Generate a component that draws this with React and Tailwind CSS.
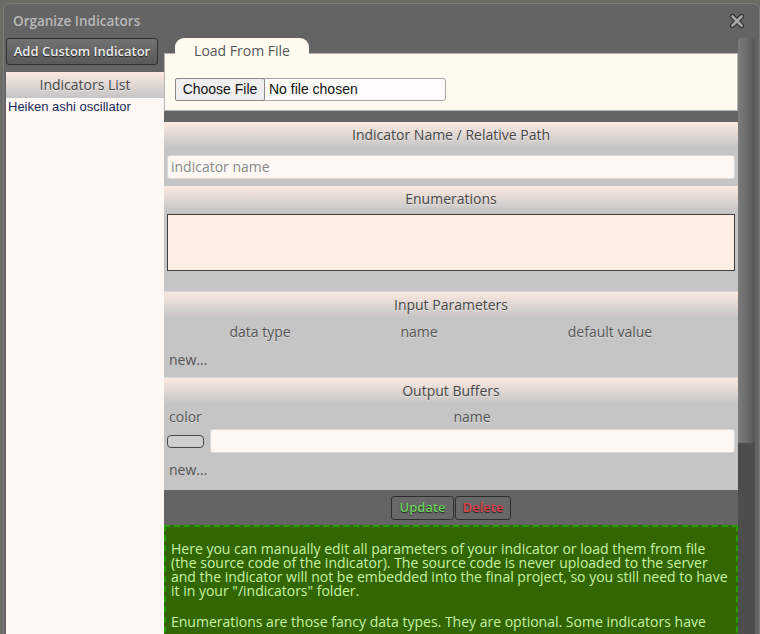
import React from "react";

const OS = { fontFamily: '"Open Sans", "DejaVu Sans", sans-serif' };
const AR = { fontFamily: '"Liberation Sans", Arial, sans-serif' };

function Header({ children }) {
  return (
    <div className="h-[26px] pb-[2px] flex items-center justify-center text-[14px] text-[#474747] bg-gradient-to-b from-[#fbe9e0] to-[#c5c5c5] [text-shadow:0_1px_0_rgba(255,255,255,0.45)]">
      {children}
    </div>
  );
}

function CloseIcon() {
  return (
    <svg width="16" height="16" viewBox="0 0 16 16">
      <path d="M3.5 3.5 L12.5 12.5 M12.5 3.5 L3.5 12.5" stroke="#333" strokeWidth="5.2" strokeLinecap="round" />
      <path d="M3.5 3.5 L12.5 12.5 M12.5 3.5 L3.5 12.5" stroke="#a8a8a8" strokeWidth="2.6" strokeLinecap="round" />
    </svg>
  );
}

export default function App() {
  return (
    <div className="w-[760px] h-[634px] overflow-hidden bg-[#6c6c66] pt-[3px] pl-[3px]" style={OS}>
      <div className="w-[757px] h-[640px] bg-[#646464] rounded-t-[7px] border-t border-l border-r border-[#7a7a7a] flex flex-col">
        {/* title bar */}
        <div className="h-[34px] shrink-0 flex items-center justify-between pl-[9px] pr-[14px]">
          <span className="text-[13.5px] font-semibold text-[#b9b9b9]">Organize Indicators</span>
          <CloseIcon />
        </div>

        <div className="flex flex-1 min-h-0">
          {/* left column */}
          <div className="w-[160px] pl-[2px] flex flex-col">
            <div className="h-[27px] w-[152px] shrink-0 rounded-[3px] border border-[#2f2f2f] bg-gradient-to-b from-[#727272] to-[#5a5a5a] flex items-center justify-center text-[13px] font-semibold text-[#ececec] [text-shadow:0_1px_1px_#222]">
              Add Custom Indicator
            </div>
            <div className="mt-[7px] flex-1 bg-[#fdf8f4] flex flex-col">
              <Header>Indicators List</Header>
              <div className="pl-[2px] text-[13px] leading-[18px] text-[#1c2a5c]" style={AR}>
                Heiken ashi oscillator
              </div>
            </div>
          </div>

          {/* right column */}
          <div className="w-[574px] flex flex-col">
            <div className="ml-[11px] w-[134px] h-[16px] rounded-t-[9px] bg-[#fffaf0] relative z-10 -mb-[1px] text-center">
              <span className="block pt-[4px] text-[14px] leading-[18px] text-[#555]">Load From File</span>
            </div>
            <div className="h-[58px] bg-[#fffaf0] border border-[#b3b3b3] pt-[24px] pl-[10px]">
              <div className="w-[271px] h-[23px] border border-[#a5a5a5] rounded-[3px] bg-[#fffdf9] flex items-center" style={AR}>
                <div className="w-[90px] h-[23px] -ml-[1px] bg-[#efefef] border border-[#8a8a8a] rounded-[2px] flex items-center justify-center text-[14px] text-[#111]">
                  Choose File
                </div>
                <span className="ml-[4px] text-[14px] text-[#111]">No file chosen</span>
              </div>
            </div>

            <div className="h-[11px]" />

            {/* Indicator name */}
            <div className="bg-[#c5c5c5]">
              <Header>Indicator Name / Relative Path</Header>
              <div className="px-[3px] pt-[7px] pb-[7px]">
                <div className="h-[24px] pb-[1px] rounded-[3px] border border-[#d8d8d8] bg-[#fdf8f4] flex items-center pl-[3px] text-[14px] text-[#8a8a8a]">
                  indicator name
                </div>
              </div>
            </div>

            {/* Enumerations */}
            <div className="bg-[#c5c5c5] border-b border-[#d6d6d6]">
              <Header>Enumerations</Header>
              <div className="px-[3px] pt-[2px] h-[79px]">
                <div className="h-[57px] border border-[#3e3e3e] bg-[#fdeee6]" />
              </div>
            </div>

            {/* Input Parameters */}
            <div className="bg-[#c5c5c5] border-b border-[#d6d6d6] h-[86px]">
              <Header>Input Parameters</Header>
              <div className="flex px-[3px] h-[26px] items-center text-[14px] text-[#555] [text-shadow:0_1px_0_rgba(255,255,255,0.4)]">
                <div className="w-[186px] text-center">data type</div>
                <div className="w-[132px] text-center">name</div>
                <div className="flex-1 text-center">default value</div>
              </div>
              <div className="pl-[5px] pt-[5px] text-[14px] text-[#555]">new...</div>
            </div>

            {/* Output Buffers */}
            <div className="bg-[#c5c5c5] h-[112px]">
              <Header>Output Buffers</Header>
              <div className="flex px-[3px] h-[25px] items-center text-[14px] text-[#555] [text-shadow:0_1px_0_rgba(255,255,255,0.4)]">
                <div className="w-[42px] pl-[2px]">color</div>
                <div className="flex-1 text-center">name</div>
              </div>
              <div className="flex items-center px-[3px] gap-[6px]">
                <div className="w-[37px] h-[13px] rounded-[4px] border border-[#474747] bg-[#cfcfcf]" />
                <div className="flex-1 h-[24px] rounded-[3px] border border-[#d8d8d8] bg-[#fdf8f4]" />
              </div>
              <div className="pl-[5px] pt-[6px] text-[14px] text-[#555]">new...</div>
            </div>

            {/* buttons */}
            <div className="h-[35px] flex items-center justify-center">
              <div className="flex gap-[1px]">
                <div className="h-[24px] w-[63px] rounded-[3px] border border-[#2e2e2e] bg-[#686868] flex items-center justify-center text-[13px] font-semibold text-[#6bd25a] [text-shadow:0_1px_1px_#222]">
                  Update
                </div>
                <div className="h-[24px] w-[56px] rounded-[3px] border border-[#2e2e2e] bg-[#686868] flex items-center justify-center text-[13px] font-semibold text-[#e0404a] [text-shadow:0_1px_1px_#222]">
                  Delete
                </div>
              </div>
            </div>

            {/* help */}
            <div className="flex-1 bg-[#336600] border-2 border-dashed border-[#23a000] pl-[5px] pr-[4px] pt-[15px] text-[14px] leading-[14px] text-[#c8f2a4]">
              <p>
                Here you can manually edit all parameters of your indicator or load them from file (the source code of the indicator). The source code is never uploaded to the server and the indicator will not be embedded into the final project, so you still need to have it in your "/indicators" folder.
              </p>
              <p className="mt-[17px]">
                Enumerations are those fancy data types. They are optional. Some indicators have
              </p>
            </div>
          </div>

          {/* scrollbar */}
          <div className="w-[17px] flex flex-col">
            <div className="h-[405px] rounded-t-[4px] bg-gradient-to-r from-[#7c7c7c] via-[#6c6c6c] to-[#555]" />
            <div className="flex-1 bg-[#4d4d4d]" />
          </div>
        </div>
      </div>
    </div>
  );
}
